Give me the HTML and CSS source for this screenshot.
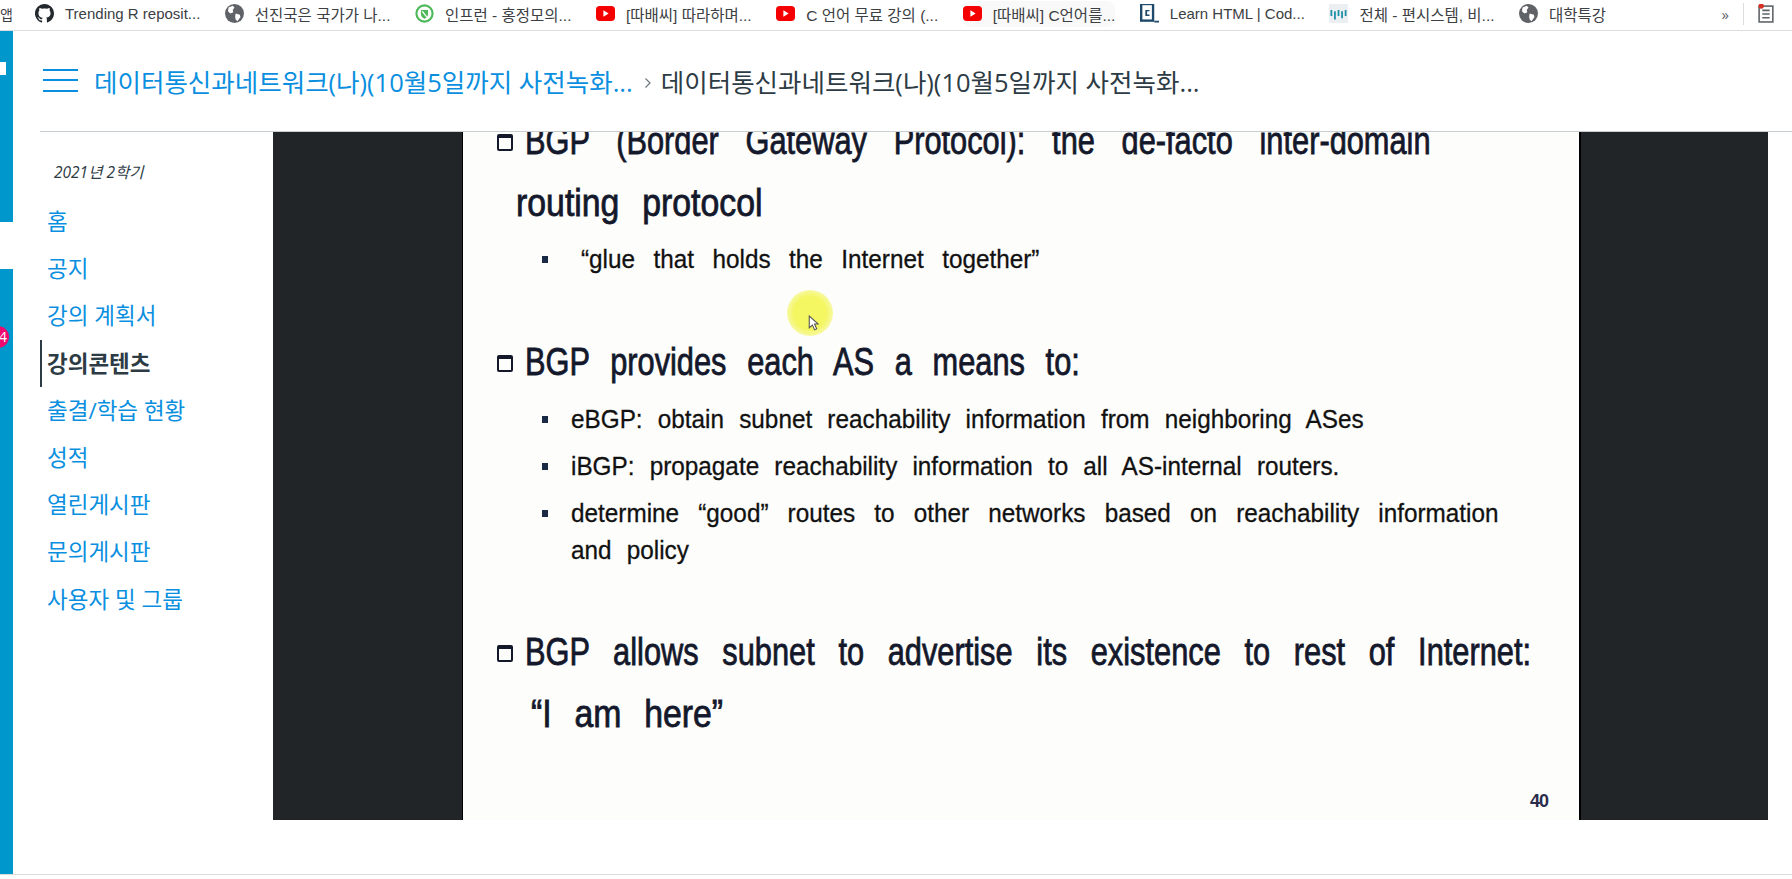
FILE: index.html
```html
<!DOCTYPE html>
<html lang="ko">

<head>
    <meta charset="UTF-8">
    <title>강의콘텐츠</title>
    <link rel="stylesheet" href="styles.css">
</head>

<body>
    <div class="bookmarks">
        <span class="apps">앱</span>
        <a class="mark">
            <svg class="ico" viewBox="0 0 16 16"><path fill="#24292e" d="M8 0C3.6 0 0 3.6 0 8c0 3.5 2.3 6.5 5.5 7.6.4.1.5-.2.5-.4v-1.4c-2.2.5-2.7-1-2.7-1-.4-.9-.9-1.2-.9-1.2-.7-.5.1-.5.1-.5.8.1 1.2.8 1.2.8.7 1.2 1.9.9 2.3.7.1-.5.3-.9.5-1.1-1.8-.2-3.6-.9-3.6-4 0-.9.3-1.6.8-2.1-.1-.2-.4-1 .1-2.1 0 0 .7-.2 2.2.8.6-.2 1.3-.3 2-.3s1.4.1 2 .3c1.5-1 2.2-.8 2.2-.8.4 1.1.2 1.9.1 2.1.5.6.8 1.3.8 2.1 0 3.1-1.9 3.7-3.7 3.9.3.3.6.8.6 1.5v2.2c0 .2.1.5.6.4C13.7 14.5 16 11.500 16 8c0-4.4-3.6-8-8-8z"/></svg>
            Trending R reposit...
        </a>
        <a class="mark mark-ko">
            <svg class="ico" viewBox="0 0 16 16"><circle cx="8" cy="8" r="8" fill="#5f6368"/><path fill="#fff" d="M3 3l3.5-1.5L8 3 6.5 5 7 7 4.5 8 2.500 6zM9 8l3.500 1 .5 2-2.500 3.500L9 13l-.5-2.500z"/></svg>
            선진국은 국가가 나...
        </a>
        <a class="mark mark-ko">
            <svg class="ico" viewBox="0 0 16 16"><circle cx="8" cy="8" r="6.800" fill="none" stroke="#4cb85a" stroke-width="1.800"/><path fill="#4cb85a" d="M5 5h6v3.500C11 10.500 9.500 12 8 12.500 6.500 12 5 10.500 5 8.500z"/><path stroke="#fff" stroke-width="1.100" d="M6 6l4 5"/></svg>
            인프런 - 홍정모의...
        </a>
        <a class="mark mark-ko">
            <svg class="ico" viewBox="0 0 18 16"><rect y="1" width="18" height="14" rx="3.500" fill="#f40000"/><path fill="#fff" d="M7 5l5 3-5 3z"/></svg>
            [따배씨] 따라하며...
        </a>
        <a class="mark mark-ko">
            <svg class="ico" viewBox="0 0 18 16"><rect y="1" width="18" height="14" rx="3.500" fill="#f40000"/><path fill="#fff" d="M7 5l5 3-5 3z"/></svg>
            C 언어 무료 강의 (...
        </a>
        <a class="mark mark-ko mark-hover">
            <svg class="ico" viewBox="0 0 18 16"><rect y="1" width="18" height="14" rx="3.500" fill="#f40000"/><path fill="#fff" d="M7 5l5 3-5 3z"/></svg>
            [따배씨] C언어를...
        </a>
        <a class="mark">
            <svg class="ico" viewBox="0 0 16 16"><rect x="1" y="0" width="10" height="14" fill="none" stroke="#204a6b" stroke-width="2"/><path fill="#204a6b" d="M8 5H4.500v5H8V8.800H6V6.200h2zM12 14h4v1.500h-4z"/></svg>
            Learn HTML | Cod...
        </a>
        <a class="mark mark-ko">
            <svg class="ico" viewBox="0 0 16 16"><rect width="16" height="16" fill="#eceff1"/><path stroke="#1f8fa8" stroke-width="1.500" d="M2 5v5M5 6v7M8 5v5M11 6v6M14 5v5"/></svg>
            전체 - 편시스템, 비...
        </a>
        <a class="mark mark-ko">
            <svg class="ico" viewBox="0 0 16 16"><circle cx="8" cy="8" r="8" fill="#5f6368"/><path fill="#fff" d="M3 3l3.500-1.500L8 3 6.500 5 7 7 4.500 8 2.500 6zM9 8l3.500 1 .5 2-2.500 3.500L9 13l-.5-2.500z"/></svg>
            대학특강
        </a>
        <span class="more">»</span>
        <span class="divider"></span>
        <span class="reading">
            <svg class="ico" viewBox="0 0 16 18"><rect x="1" y="2" width="13" height="15" fill="none" stroke="#5f6368" stroke-width="1.500"/><path stroke="#5f6368" stroke-width="1.500" d="M4 6h7M4 9.500h7M4 13h7"/><circle cx="3" cy="2" r="2.500" fill="#d93025"/></svg>
        </span>
    </div>

    <div class="app">
        <div class="global-nav">
            <div class="strip strip-top"><span class="strip-logo"></span></div>
            <div class="strip strip-bottom"><span class="badge">4</span></div>
        </div>

        <div class="main">
            <header class="crumbs">
                <button class="burger"><span></span><span></span><span></span></button>
                <a class="crumb-link">데이터통신과네트워크(나)(10월5일까지 사전녹화...</a>
                <svg class="chevron" viewBox="0 0 8 12"><path d="M1.500 1.500L6 6l-4.500 4.500" fill="none" stroke="#6b7780" stroke-width="1.200"/></svg>
                <span class="crumb-current">데이터통신과네트워크(나)(10월5일까지 사전녹화...</span>
            </header>

            <div class="content">
                <nav class="side">
                    <p class="term">2021년 2학기</p>
                    <a class="side-link">홈</a>
                    <a class="side-link">공지</a>
                    <a class="side-link">강의 계획서</a>
                    <a class="side-link active">강의콘텐츠</a>
                    <a class="side-link">출결/학습 현황</a>
                    <a class="side-link">성적</a>
                    <a class="side-link">열린게시판</a>
                    <a class="side-link">문의게시판</a>
                    <a class="side-link">사용자 및 그룹</a>
                </nav>

                <div class="player">
                    <div class="slide">
                        <div class="head head-first"><span class="box"></span><span class="txt fit-first">BGP (Border Gateway Protocol): the de-facto inter-domain</span></div>
                        <div class="head head-cont"><span class="txt">routing protocol</span></div>
                        <div class="sub sub-glue"><span class="dot"></span><span class="txt">“glue that holds the Internet together”</span></div>

                        <div class="head head-gap"><span class="box"></span><span class="txt">BGP provides each AS a means to:</span></div>
                        <div class="sub sub-item"><span class="dot"></span><span class="txt">eBGP: obtain subnet reachability information from neighboring ASes</span></div>
                        <div class="sub sub-item"><span class="dot"></span><span class="txt">iBGP: propagate reachability information to all AS-internal routers.</span></div>
                        <div class="sub sub-item"><span class="dot"></span><span class="txt fit-sub">determine “good” routes to other networks based on reachability information</span></div>
                        <div class="sub sub-more"><span class="txt">and policy</span></div>

                        <div class="head head-gap head-last"><span class="box"></span><span class="txt fit-last">BGP allows subnet to advertise its existence to rest of Internet:</span></div>
                        <div class="head head-quote"><span class="txt">“I am here”</span></div>
                        <div class="page-no">40</div>

                        <div class="pointer">
                            <svg class="arrow" viewBox="0 0 10 16"><path d="M1 1v11l3-2.500 2 4.500 2-1-2-4.500h3.500z" fill="#fff" stroke="#555" stroke-width="1"/></svg>
                        </div>
                    </div>
                </div>
            </div>
        </div>
    </div>
</body>

</html>
```

FILE: styles.css
```css
* {
    box-sizing: border-box;
}

html,
body {
    margin: 0;
    height: 100%;
    overflow: hidden;
}

body {
    background-color: #fff;
    font-family: "Open Sans", "Noto Sans CJK KR", sans-serif;
    color: #2d3b45;
}

/* bookmarks bar */
.bookmarks {
    display: flex;
    align-items: center;
    height: 31px;
    padding-bottom: 3px;
    border-bottom: 1px solid #dadce0;
    font-size: 14px;
    color: #3c4043;
    white-space: nowrap;
    overflow: hidden;
}

.apps {
    width: 35px;
    flex: none;
}

.mark {
    display: flex;
    align-items: center;
    gap: 11px;
    height: 26px;
    margin-right: 24.500px;
    font-family: "Liberation Sans", "Noto Sans CJK KR", sans-serif;
    font-size: 15px;
}

.mark-ko {
    font-size: 15.500px;
}

.mark-hover {
    background-color: #f9f9f9;
    border-radius: 8px;
}

.ico {
    width: 19px;
    height: 19px;
    flex: none;
}

.more {
    margin-left: auto;
    font-size: 15px;
    color: #5f6368;
}

.divider {
    width: 1px;
    height: 22px;
    margin: 0 13px 0 14px;
    background-color: #dadce0;
}

.reading {
    display: flex;
    margin-right: 16px;
}

/* layout */
.app {
    display: flex;
    height: 844px;
    border-bottom: 1px solid #dcdcdc;
}

.global-nav {
    display: flex;
    flex-direction: column;
    width: 13px;
    margin-right: 27px;
    flex: none;
}

.strip {
    position: relative;
    background-color: #0098cc;
}

.strip-top {
    height: 191px;
    margin-bottom: 47px;
}

.strip-bottom {
    flex: 1;
}

.strip-logo {
    position: absolute;
    left: 0;
    top: 31px;
    width: 6px;
    height: 13px;
    background-color: #fff;
}

.badge {
    position: absolute;
    left: -13px;
    top: 57px;
    width: 22px;
    height: 22px;
    border-radius: 50%;
    background-color: #ee0a6f;
    color: #fff;
    font-size: 14px;
    line-height: 22px;
    text-align: right;
    padding-right: 2px;
}

.main {
    flex: 1;
    display: flex;
    flex-direction: column;
    min-width: 0;
}

/* breadcrumb */
.crumbs {
    display: flex;
    align-items: center;
    height: 101px;
    padding-bottom: 2px;
    border-bottom: 1px solid #c7cdd1;
    font-size: 25.500px;
    white-space: nowrap;
}

.burger {
    display: flex;
    flex-direction: column;
    justify-content: space-between;
    width: 35px;
    height: 23px;
    margin: 0 16px 0 3px;
    padding: 0;
    border: none;
    background: none;
}

.burger span {
    height: 2px;
    background-color: #0a8fe0;
}

.crumb-link {
    color: #0a8fe0;
}

.chevron {
    width: 8px;
    height: 12px;
    margin: 6px 9px 0 11px;
}

/* course menu */
.content {
    flex: 1;
    display: flex;
    min-height: 0;
}

.side {
    width: 233px;
    flex: none;
    padding-top: 28px;
}

.term {
    margin: 0 0 14px 14px;
    font-size: 15.500px;
    line-height: 24px;
    font-style: italic;
}

.side-link {
    display: block;
    height: 47.200px;
    padding-left: 7px;
    font-size: 22.500px;
    line-height: 47px;
    color: #0a8fe0;
}

.side-link.active {
    border-left: 2px solid #2d3b45;
    padding-left: 5px;
    color: #2d3b45;
    font-weight: 700;
}

/* lecture video */
.player {
    width: 1495px;
    height: 688px;
    padding: 0 187px 0 189px;
    background-color: #212528;
}

.slide {
    position: relative;
    height: 688px;
    padding-left: 62px;
    overflow: hidden;
    background-color: #fdfdfb;
    border-left: 1px solid #000;
    border-right: 2px solid #000;
    color: #14182b;
    font-family: "Liberation Sans", sans-serif;
    white-space: nowrap;
}

.txt {
    display: block;
    transform-origin: left top;
}

.head {
    position: relative;
    height: 62px;
    font-size: 38px;
    line-height: 66px;
    -webkit-text-stroke: 0.8px #14182b;
}

.head .txt {
    transform: scaleX(0.81);
    word-spacing: 15px;
}

.head-first {
    margin-top: -24px;
}

.head-cont {
    margin-left: -9px;
}

.head-gap {
    margin-top: 51px;
}

.head-last {
    margin-top: 50px;
}

.head-quote {
    margin-left: 6px;
}

/* short lines sit a bit wider on the slide */
.head-cont .txt,
.head-quote .txt {
    transform: scaleX(0.89);
}

.head .fit-first,
.head .fit-last,
.sub .fit-sub {
    word-spacing: 0;
    white-space: normal;
    text-align: justify;
    text-align-last: justify;
}

.head .fit-first {
    width: 1118px;
}

.head .fit-last {
    width: 1242px;
}

.sub .fit-sub {
    width: 992px;
}

.box {
    position: absolute;
    left: -28px;
    top: 26px;
    width: 16px;
    height: 17px;
    border: 2px solid #14182b;
    border-top-width: 4px;
    border-radius: 2px;
    -webkit-text-stroke: 0;
}

.sub {
    position: relative;
    height: 38px;
    margin-left: 46px;
    font-size: 26px;
    line-height: 38px;
    color: #111;
    -webkit-text-stroke: 0.3px #111;
}

.sub .txt {
    transform: scaleX(0.935);
    word-spacing: 9px;
}

.sub-glue {
    margin-top: 8px;
    margin-left: 56px;
}

.sub-glue .txt {
    word-spacing: 12.500px;
}

.sub-item {
    margin-top: 9px;
}

.sub-more {
    margin-top: -1px;
}

.dot {
    position: absolute;
    left: -29px;
    top: 16px;
    width: 6px;
    height: 7px;
    background-color: #1b2a44;
}

.sub-glue .dot {
    left: -39px;
}

.page-no {
    margin-top: 46px;
    padding-right: 31px;
    font-size: 18px;
    line-height: 24px;
    letter-spacing: -1px;
    text-align: right;
    font-weight: 700;
    color: #2b2b4b;
}

/* presenter's cursor */
.pointer {
    position: absolute;
    left: 324px;
    top: 158px;
    width: 46px;
    height: 46px;
    border-radius: 50%;
    background: radial-gradient(circle, #f4f662 50%, rgba(246, 248, 140, 0.6) 78%, rgba(253, 253, 251, 0) 100%);
}

.arrow {
    position: absolute;
    left: 21px;
    top: 25px;
    width: 11px;
    height: 17px;
}
```
